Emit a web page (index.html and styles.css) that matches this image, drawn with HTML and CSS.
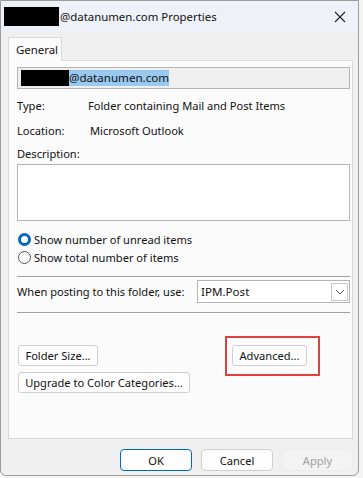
FILE: index.html
```html
<!DOCTYPE html>
<html>
<head>
<meta charset="utf-8">
<link rel="stylesheet" href="styles.css">
</head>
<body>
<div class="window">
  <div class="titlebar">
    <span class="redact title-redact"></span>
    <span class="title-text">@datanumen.com Properties</span>
    <span class="close">
      <svg width="14" height="14" viewBox="0 0 14 14"><path d="M2 2 L12 12 M12 2 L2 12" stroke="#222" stroke-width="1.1" fill="none"/></svg>
    </span>
  </div>
  <div class="body">
    <div class="tabs"><div class="tab">General</div></div>
    <div class="panel">
      <div class="namefield">
        <span class="redact name-redact"></span><span class="sel">@datanumen.com</span>
      </div>
      <div class="inforow type-row"><span class="lbl">Type:</span><span class="val">Folder containing Mail and Post Items</span></div>
      <div class="inforow loc-row"><span class="lbl">Location:</span><span class="val val-loc">Microsoft Outlook</span></div>
      <div class="desc-label">Description:</div>
      <div class="textarea"></div>
      <div class="radios">
        <div class="radio-row"><span class="radio on"></span><span>Show number of unread items</span></div>
        <div class="radio-row"><span class="radio"></span><span>Show total number of items</span></div>
      </div>
      <div class="sep"></div>
      <div class="post-row">
        <span class="post-label">When posting to this folder, use:</span>
        <div class="combo">
          <span class="combo-text">IPM.Post</span>
          <span class="combo-btn"><svg width="10" height="6" viewBox="0 0 10 6"><path d="M1 1 L5 5 L9 1" stroke="#555" stroke-width="1" fill="none"/></svg></span>
        </div>
      </div>
      <div class="sep sep2"></div>
      <div class="btn-area">
        <div class="btn-col">
          <div class="btn folder-btn">Folder Size...</div>
          <div class="btn upgrade-btn">Upgrade to Color Categories...</div>
        </div>
        <div class="adv-wrap">
          <div class="btn adv-btn">Advanced...</div>
        </div>
      </div>
    </div>
    <div class="footer">
      <div class="fbtn ok">OK</div>
      <div class="fbtn">Cancel</div>
      <div class="fbtn apply">Apply</div>
    </div>
  </div>
</div>
</body>
</html>
```
FILE: styles.css
```css
html, body {
  margin: 0;
  padding: 0;
}
body {
  background: #f4f4f4;
  font-family: "Noto Sans", "Open Sans", sans-serif;
  font-size: 11.1px;
  color: #111;
  width: 363px;
  height: 478px;
  overflow: hidden;
}
.window {
  box-sizing: border-box;
  width: 359px;
  height: 476px;
  border: 1px solid #9c9c9c;
  border-radius: 0 0 6px 6px;
  background: #f0f0f0;
  display: flex;
  flex-direction: column;
}
.titlebar {
  height: 31px;
  background: #eef1f8;
  display: flex;
  align-items: center;
  padding-left: 3px;
}
.redact {
  display: inline-block;
  background: #000;
}
.title-redact {
  width: 55px;
  height: 19px;
}
.title-text {
  margin-left: 1px;
  font-size: 11.4px;
  color: #111;
}
.close {
  margin-left: auto;
  margin-right: 11px;
  display: flex;
}
.body {
  flex: 1;
  display: flex;
  flex-direction: column;
  padding: 0 5px 0 7px;
}
.tabs {
  margin-top: 5px;
  display: flex;
  height: 23px;
}
.tab {
  box-sizing: border-box;
  width: 54px;
  height: 24px;
  border: 1px solid #d9d9d9;
  border-bottom: none;
  background: #fbfbfb;
  padding: 4px 0 0 7px;
  font-size: 11.4px;
  position: relative;
  z-index: 1;
}
.panel {
  box-sizing: border-box;
  height: 379px;
  border: 1px solid #d9d9d9;
  background: #fbfbfb;
  padding: 6px 2px 0 8px;
  display: flex;
  flex-direction: column;
}
.namefield {
  box-sizing: border-box;
  height: 22px;
  border: 1px solid #b4b4b4;
  background: #efefef;
  display: flex;
  align-items: center;
  padding-left: 3px;
  font-size: 11.6px;
}
.name-redact {
  width: 48px;
  height: 16px;
}
.sel {
  background: #99c9ef;
  height: 16px;
  line-height: 16px;
  color: #111;
}
.inforow {
  display: flex;
  height: 25px;
  align-items: center;
}
.type-row {
  margin-top: 4px;
}
.lbl {
  width: 71px;
}
.val-loc {
  margin-left: 2px;
}
.desc-label {
  height: 21px;
  line-height: 21px;
}
.textarea {
  box-sizing: border-box;
  height: 57px;
  border: 1px solid #b4b4b4;
  background: #fff;
}
.radios {
  margin-top: 9px;
  display: flex;
  flex-direction: column;
}
.radio-row {
  display: flex;
  align-items: center;
  height: 18px;
}
.radio {
  box-sizing: border-box;
  width: 13px;
  height: 13px;
  border-radius: 50%;
  border: 1px solid #555;
  background: #fff;
  margin: 0 3px 0 1px;
}
.radio.on {
  border: 3.5px solid #0067c0;
}
.sep {
  margin-top: 10px;
  height: 1px;
  background: #a0a0a0;
  border-bottom: 1px solid #fff;
}
.post-row {
  display: flex;
  align-items: center;
  margin-top: 2px;
  height: 23px;
}
.post-label {
  width: 180px;
  white-space: nowrap;
}
.combo {
  box-sizing: border-box;
  flex: 1;
  height: 23px;
  border: 1px solid #b4b4b4;
  background: #fff;
  display: flex;
  align-items: center;
  padding-left: 3px;
  font-size: 11.6px;
}
.combo-text {
  flex: 1;
}
.combo-btn {
  box-sizing: border-box;
  width: 17px;
  height: 18px;
  border: 1px solid #c8c8c8;
  margin-right: 1px;
  display: flex;
  align-items: center;
  justify-content: center;
}
.sep2 {
  margin-top: 9px;
}
.btn-area {
  display: grid;
  grid-template-columns: 208px auto;
  margin-top: 31px;
}
.btn-col {
  display: flex;
  flex-direction: column;
  gap: 6px;
  padding-left: 1px;
  align-items: flex-start;
}
.btn {
  box-sizing: border-box;
  height: 21px;
  border: 1px solid #cfcfcf;
  border-radius: 3px;
  background: #fdfdfd;
  display: flex;
  align-items: center;
  justify-content: center;
  padding: 0;
  white-space: nowrap;
}
.folder-btn {
  width: 80px;
}
.upgrade-btn {
  width: 172px;
}
.adv-wrap {
  margin-top: -9px;
  box-sizing: border-box;
  width: 95px;
  height: 40px;
  border: 2px solid #e2403e;
  padding: 7px 0 0 5px;
}
.adv-btn {
  width: 75px;
}
.footer {
  display: flex;
  justify-content: flex-end;
  gap: 9px;
  margin-top: 10px;
}
.fbtn {
  box-sizing: border-box;
  width: 72px;
  height: 22px;
  border: 1px solid #cfcfcf;
  border-radius: 4px;
  background: #fdfdfd;
  display: flex;
  align-items: center;
  justify-content: center;
}
.fbtn.ok {
  border-color: #0067c0;
}
.fbtn.apply {
  border-color: #ececec;
  background: #f3f3f3;
  color: #a0a0a0;
  width: 71px;
}
```
